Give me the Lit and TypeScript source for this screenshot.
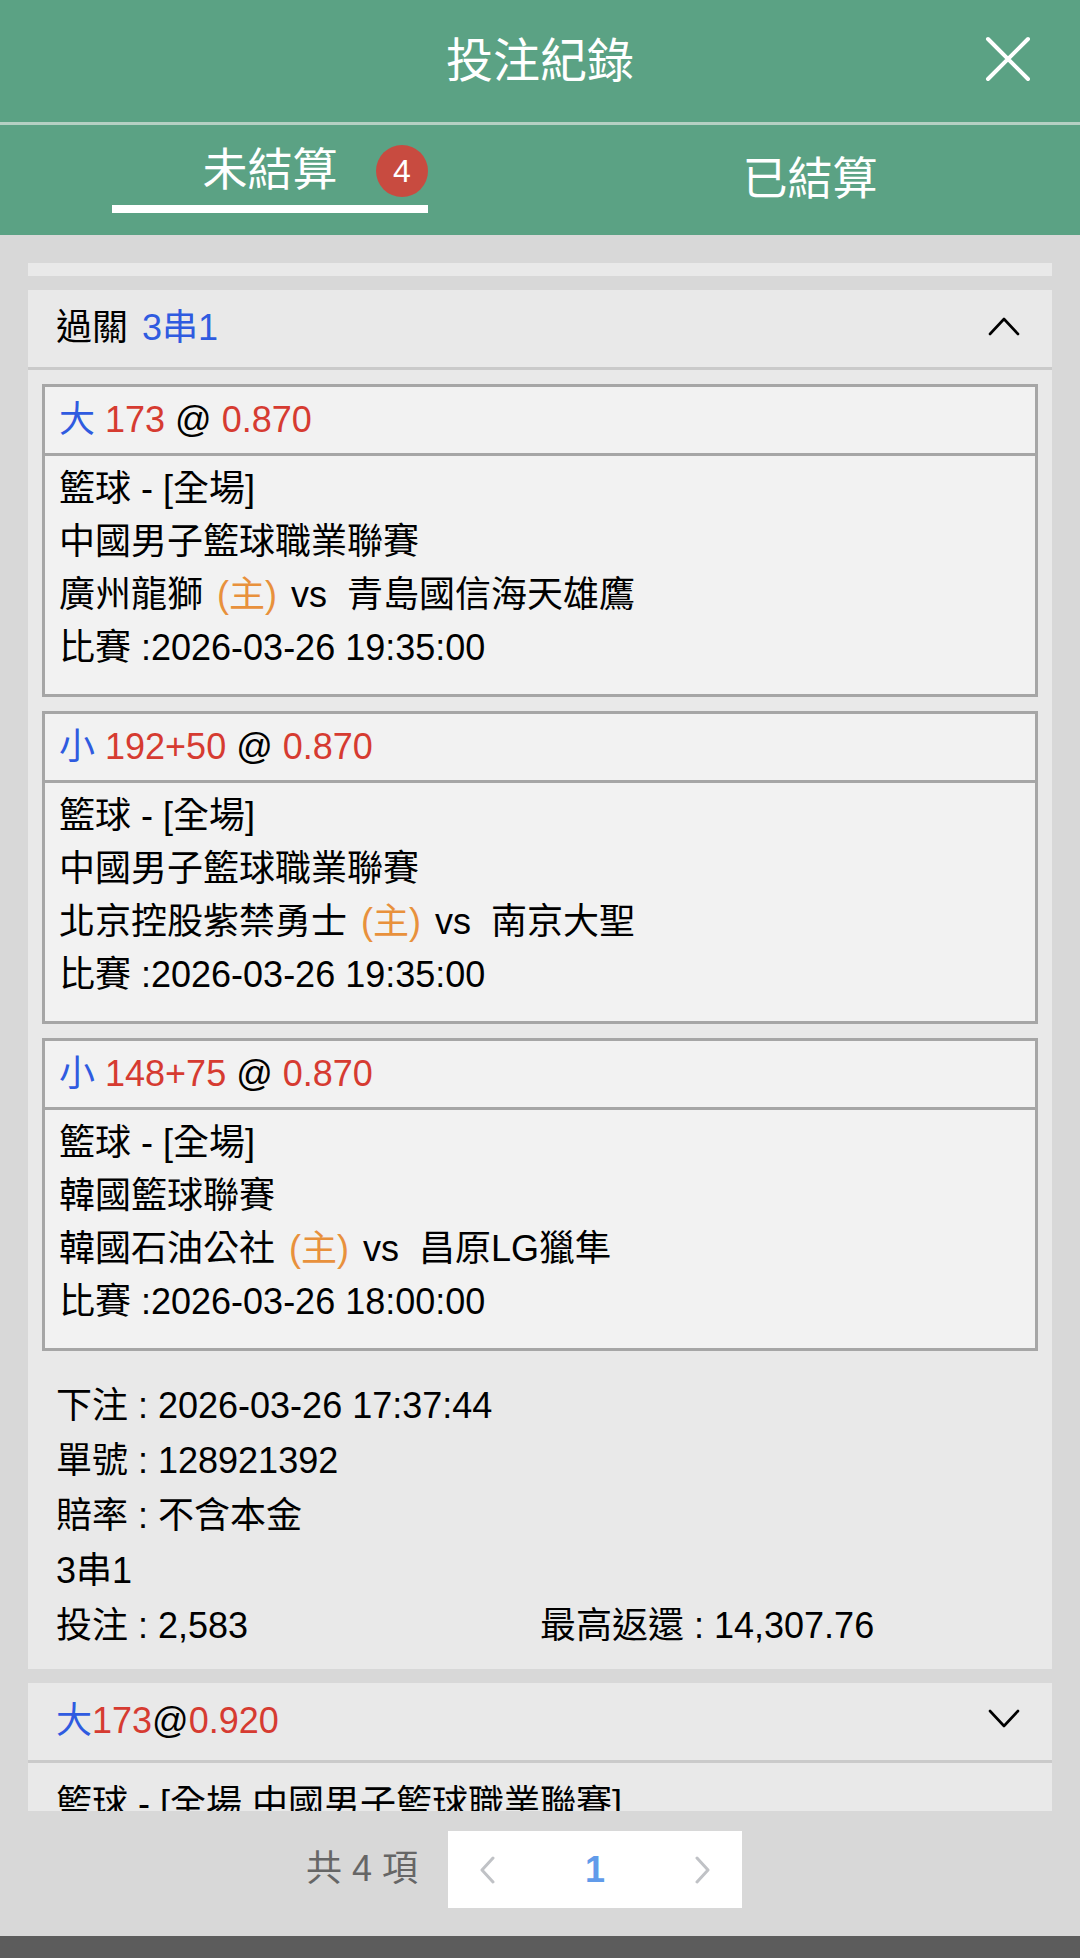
import { LitElement, html, css, svg } from "lit";
import { customElement, property, state } from "lit/decorators.js";
import { classMap } from "lit/directives/class-map.js";

interface Leg {
  pick: string;
  line: string;
  odds: string;
  league: string;
  home: string;
  away: string;
  time: string;
}

const LEGS: Leg[] = [
  {
    pick: "大",
    line: "173",
    odds: "0.870",
    league: "中國男子籃球職業聯賽",
    home: "廣州龍獅",
    away: "青島國信海天雄鷹",
    time: "2026-03-26 19:35:00",
  },
  {
    pick: "小",
    line: "192+50",
    odds: "0.870",
    league: "中國男子籃球職業聯賽",
    home: "北京控股紫禁勇士",
    away: "南京大聖",
    time: "2026-03-26 19:35:00",
  },
  {
    pick: "小",
    line: "148+75",
    odds: "0.870",
    league: "韓國籃球聯賽",
    home: "韓國石油公社",
    away: "昌原LG獵隼",
    time: "2026-03-26 18:00:00",
  },
];

const chevron = (up: boolean) => html`
  <svg class="chevron" viewBox="0 0 32 20" aria-hidden="true">
    ${up
      ? svg`<path d="M2 18 L16 3 L30 18" />`
      : svg`<path d="M2 2 L16 17 L30 2" />`}
  </svg>
`;

@customElement("bet-leg")
class BetLeg extends LitElement {
  @property({ attribute: false }) leg!: Leg;

  static styles = css`
    :host {
      display: block;
      border: 3px solid #a6a6a6;
      background: #f2f2f2;
    }
    .head {
      border-bottom: 3px solid #a6a6a6;
      padding: 0 14px;
      line-height: 66px;
    }
    .body {
      padding: 6px 14px 20px;
      line-height: 53px;
    }
    .pick {
      color: #2f5be0;
    }
    .num {
      color: #d63b31;
    }
    .home {
      margin: 0 4px;
      color: #e8913c;
    }
  `;

  render() {
    const l = this.leg;
    return html`
      <div class="head">
        <span class="pick">${l.pick}</span> <span class="num">${l.line}</span> @
        <span class="num">${l.odds}</span>
      </div>
      <div class="body">
        <div>籃球 - [全場]</div>
        <div>${l.league}</div>
        <div>${l.home} <span class="home">(主)</span> vs&nbsp; ${l.away}</div>
        <div>比賽 :${l.time}</div>
      </div>
    `;
  }
}

@customElement("app-root")
class AppRoot extends LitElement {
  @state() private tab = 0;

  static styles = css`
    :host {
      display: flex;
      flex-direction: column;
      height: 100vh;
      background: #d8d8d8;
      color: #000;
      font-family: "Liberation Sans", "Noto Sans CJK TC", sans-serif;
      font-size: 36px;
    }
    button {
      appearance: none;
      border: 0;
      margin: 0;
      padding: 0;
      background: none;
      color: inherit;
      font: inherit;
      cursor: pointer;
    }
    .top {
      display: grid;
      grid-template-columns: 1fr auto 1fr;
      align-items: center;
      height: 122px;
      padding: 0 48px;
      background: #5ba284;
      color: #fff;
      border-bottom: 3px solid #b5d0c3;
    }
    .title {
      grid-column: 2;
      margin: 0;
      font-size: 47px;
      line-height: 56px;
      font-weight: 400;
    }
    .close {
      justify-self: end;
      display: flex;
      padding-bottom: 4px;
    }
    .close svg {
      width: 48px;
      height: 48px;
      fill: none;
      stroke: #fff;
      stroke-width: 4;
      stroke-linecap: round;
    }
    .tabs {
      display: grid;
      grid-template-columns: 1fr 1fr;
      justify-items: center;
      align-items: center;
      height: 110px;
      background: #5ba284;
      color: #fff;
    }
    .tab {
      position: relative;
      width: 316px;
      font-size: 45px;
      line-height: 68px;
    }
    .tab.active {
      margin-bottom: 10px;
      border-bottom: 8px solid #fff;
    }
    .badge {
      position: absolute;
      right: 0;
      top: 8px;
      width: 52px;
      height: 52px;
      border-radius: 50%;
      background: #c84b40;
      font-size: 32px;
      line-height: 52px;
    }
    .list {
      flex: 1;
      min-height: 0;
      overflow-y: auto;
      scrollbar-width: none;
      margin: 28px 28px 0;
      display: flex;
      flex-direction: column;
      gap: 14px;
    }
    .card {
      flex: none;
      background: #e9e9e9;
    }
    .tail {
      height: 13px;
    }
    .card-head {
      display: flex;
      align-items: center;
      justify-content: space-between;
      width: 100%;
      padding: 0 32px 2px 28px;
      line-height: 75px;
      border-bottom: 3px solid #cacaca;
      text-align: left;
    }
    .combo {
      display: flex;
      gap: 14px;
    }
    .chevron {
      width: 32px;
      height: 20px;
      margin-bottom: 4px;
      fill: none;
      stroke: #000;
      stroke-width: 2.6;
      stroke-linecap: round;
      stroke-linejoin: round;
    }
    .blue {
      color: #2f5be0;
    }
    .red {
      color: #d63b31;
    }
    .legs {
      display: flex;
      flex-direction: column;
      gap: 14px;
      padding: 14px 14px 0;
    }
    .info {
      padding: 27px 28px 16px;
      line-height: 55px;
    }
    .single {
      padding: 13px 28px 16px;
      line-height: 55px;
    }
    .split {
      display: grid;
      grid-template-columns: 1fr 1fr;
    }
    .pager {
      display: flex;
      justify-content: center;
      align-items: center;
      gap: 30px;
      padding: 20px 32px 28px 0;
      line-height: 40px;
      color: #666;
    }
    .total {
      padding-bottom: 2px;
    }
    .pages {
      display: grid;
      grid-template-columns: 78px 138px 78px;
      height: 77px;
      background: #fff;
    }
    .pages button {
      display: flex;
      align-items: center;
      justify-content: center;
    }
    .pages .current {
      color: #619bea;
      font-weight: 700;
    }
    .arrow {
      width: 16px;
      height: 28px;
      fill: none;
      stroke: #c0c2c6;
      stroke-width: 3;
      stroke-linecap: round;
      stroke-linejoin: round;
    }
    .bottom {
      height: 22px;
      background: #5c5c5c;
    }
  `;

  render() {
    return html`
      <header class="top">
        <h1 class="title">投注紀錄</h1>
        <button class="close" aria-label="關閉">
          <svg viewBox="0 0 48 48"><path d="M4 4 L44 44 M44 4 L4 44" /></svg>
        </button>
      </header>
      <nav class="tabs">
        <button
          class=${classMap({ tab: true, active: this.tab === 0 })}
          @click=${() => (this.tab = 0)}
        >
          未結算<span class="badge">4</span>
        </button>
        <button
          class=${classMap({ tab: true, active: this.tab === 1 })}
          @click=${() => (this.tab = 1)}
        >
          已結算
        </button>
      </nav>
      <main class="list">
        <div class="card tail"></div>
        <section class="card">
          <button class="card-head">
            <span class="combo"><span>過關</span><span class="blue">3串1</span></span>
            ${chevron(true)}
          </button>
          <div class="legs">
            ${LEGS.map((leg) => html`<bet-leg .leg=${leg}></bet-leg>`)}
          </div>
          <div class="info">
            <div>下注 : 2026-03-26 17:37:44</div>
            <div>單號 : 128921392</div>
            <div>賠率 : 不含本金</div>
            <div>3串1</div>
            <div class="split">
              <span>投注 : 2,583</span>
              <span>最高返還 : 14,307.76</span>
            </div>
          </div>
        </section>
        <section class="card">
          <button class="card-head">
            <span
              ><span class="blue">大</span><span class="red">173</span>@<span
                class="red"
                >0.920</span
              ></span
            >
            ${chevron(false)}
          </button>
          <div class="single">籃球 - [全場 中國男子籃球職業聯賽]</div>
        </section>
      </main>
      <footer class="pager">
        <span class="total">共 4 項</span>
        <div class="pages">
          <button aria-label="上一頁">
            <svg class="arrow" viewBox="0 0 16 28"><path d="M14 2 L3 14 L14 26" /></svg>
          </button>
          <button class="current">1</button>
          <button aria-label="下一頁">
            <svg class="arrow" viewBox="0 0 16 28"><path d="M2 2 L13 14 L2 26" /></svg>
          </button>
        </div>
      </footer>
      <div class="bottom"></div>
    `;
  }
}
